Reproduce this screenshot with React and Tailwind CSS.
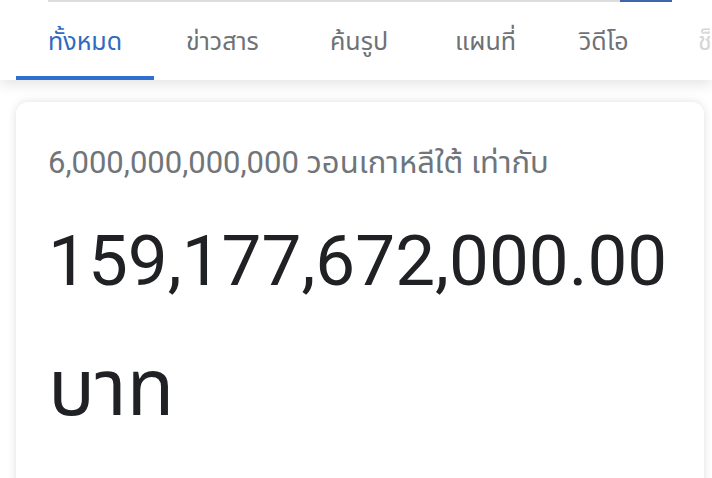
const tabs = [
  { label: 'ทั้งหมด', w: 'w-[138px]', active: true },
  { label: 'ข่าวสาร', w: 'w-[144px]' },
  { label: 'ค้นรูป', w: 'w-[125px]' },
  { label: 'แผนที่', w: 'w-[124px]' },
  { label: 'วิดีโอ', w: 'w-[119px]' },
  { label: 'ช็อปปิ้ง', w: 'w-[120px]', faded: true },
];

function TabBar() {
  return (
    <div className="relative z-10 bg-white shadow-[0_5px_12px_rgba(0,0,0,0.1)]">
      {/* bottom edge of the search box */}
      <div className="flex h-[2px]">
        <div className="ml-[48px] w-[572px] bg-[#dcdcdc]" />
        <div className="w-[52px] bg-[#3f64ad]" />
      </div>
      <div className="flex h-[78px] overflow-hidden whitespace-nowrap pl-4">
        {tabs.map((t) => (
          <div
            key={t.label}
            className={
              'flex shrink-0 flex-col justify-between ' +
              t.w +
              ' ' +
              (t.active ? 'text-[#2f6cc0]' : t.faded ? 'text-[#d6d6d6]' : 'text-[#6e7176]')
            }
          >
            <div className="h-[4px]" />
            <span className="pl-8 text-[25px] leading-none">{t.label}</span>
            <div className={'h-[4px] ' + (t.active ? 'bg-[#2f6fd0]' : 'bg-transparent')} />
          </div>
        ))}
      </div>
    </div>
  );
}

export default function App() {
  return (
    <div
      className="h-[478px] w-[712px] overflow-hidden bg-white"
      style={{ fontFamily: 'Roboto, "Noto Sans Thai", "Noto Sans", sans-serif' }}
    >
      <TabBar />
      <div className="pl-4 pr-2 pt-[22px]">
        <div className="h-[420px] rounded-xl bg-white px-8 pt-[41px] shadow-[0_0_10px_rgba(0,0,0,0.13)]">
          <div className="text-[31px] leading-[40px] text-[#70757a]">
            6,000,000,000,000 วอนเกาหลีใต้ เท่ากับ
          </div>
          <div className="mt-[38px] text-[71px] leading-[80px] text-[#202124]">
            159,177,672,000.00
          </div>
          <div className="mt-[46px] text-[78px] leading-[84px] text-[#202124]">บาท</div>
        </div>
      </div>
    </div>
  );
}
